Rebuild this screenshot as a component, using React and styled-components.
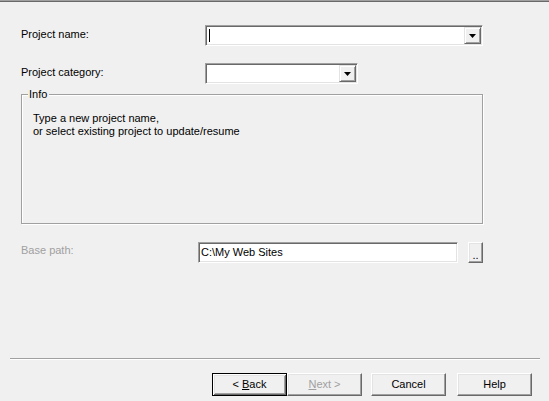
import React from "react";
import styled, { createGlobalStyle } from "styled-components";

const GlobalStyle = createGlobalStyle`
  html, body {
    margin: 0;
    padding: 0;
    background: #f0f0f0;
  }
  body {
    font-family: "Liberation Sans", Arial, sans-serif;
    font-size: 11px;
    color: #000;
  }
`;

const Wizard = styled.div`
  width: 549px;
  height: 401px;
  box-sizing: border-box;
  display: flex;
  flex-direction: column;
  background: #f0f0f0;
  border-top: 1px solid #a0a0a0;
  box-shadow: inset 0 1px 0 #696969;
  overflow: hidden;
`;

const Body = styled.div`
  display: flex;
  flex-direction: column;
  padding: 24px 0 0 21px;
`;

const FieldRow = styled.div`
  display: grid;
  grid-template-columns: 184px auto;
  height: 21px;
  margin-top: ${(p) => p.$gap || 0}px;
`;

const Label = styled.div`
  line-height: 13px;
  padding-top: 3px;
  color: ${(p) => (p.$disabled ? "#a0a0a0" : "#000")};
`;

const Combo = styled.div`
  width: ${(p) => p.$width}px;
  height: 21px;
  box-sizing: border-box;
  display: flex;
  align-items: center;
  justify-content: space-between;
  padding: 1px;
  background: #fff;
  border: 1px solid;
  border-color: #a0a0a0 #fff #fff #a0a0a0;
  box-shadow: inset 1px 1px 0 #696969, inset -1px -1px 0 #e3e3e3;
`;

const Caret = styled.span`
  width: 1px;
  height: 13px;
  margin-left: 2px;
  background: #000;
`;

const DropButton = styled.div`
  width: 17px;
  height: 17px;
  box-sizing: border-box;
  margin-left: auto;
  display: flex;
  align-items: center;
  justify-content: center;
  background: #f0f0f0;
  border: 1px solid;
  border-color: #e3e3e3 #696969 #696969 #e3e3e3;
  box-shadow: inset 1px 1px 0 #fff, inset -1px -1px 0 #a0a0a0;
`;

const GroupBox = styled.div`
  position: relative;
  width: 462px;
  height: 130px;
  box-sizing: border-box;
  margin-top: 10px;
  border: 1px solid #a0a0a0;
  box-shadow: 1px 1px 0 #fff, inset 1px 1px 0 #fff;
`;

const Legend = styled.span`
  position: absolute;
  top: -7px;
  left: 6px;
  padding: 0 2px 0 1px;
  line-height: 13px;
  background: #f0f0f0;
`;

const InfoText = styled.div`
  padding: 17px 0 0 11px;
  line-height: 13px;
`;

const PathRow = styled.div`
  display: flex;
  align-items: flex-start;
  margin-top: 18px;
  height: 21px;
`;

const PathLabel = styled(Label)`
  width: 177px;
  padding-top: 2px;
`;

const PathInput = styled.div`
  width: 260px;
  height: 21px;
  box-sizing: border-box;
  padding: 2px 2px 0;
  line-height: 15px;
  background: #fff;
  border: 1px solid;
  border-color: #a0a0a0 #fff #fff #a0a0a0;
  box-shadow: inset 1px 1px 0 #696969, inset -1px -1px 0 #e3e3e3;
`;

const BrowseButton = styled.div`
  width: 15px;
  height: 21px;
  box-sizing: border-box;
  margin-left: 10px;
  display: flex;
  align-items: flex-end;
  justify-content: center;
  padding-bottom: 3px;
  line-height: 8px;
  background: #f0f0f0;
  border: 1px solid;
  border-color: #fff #696969 #696969 #fff;
  box-shadow: inset -1px -1px 0 #a0a0a0, inset 1px 1px 0 #e3e3e3;
`;

const Footer = styled.div`
  margin-top: auto;
  display: flex;
  flex-direction: column;
  padding-bottom: 5px;
`;

const Separator = styled.div`
  margin: 0 9px 0 10px;
  border-top: 1px solid #a0a0a0;
  border-bottom: 1px solid #fff;
`;

const ButtonBar = styled.div`
  display: flex;
  padding: 13px 0 0 212px;
`;

const Button = styled.div`
  width: 75px;
  height: 23px;
  box-sizing: border-box;
  margin-left: ${(p) => p.$gap || 0}px;
  display: flex;
  align-items: center;
  justify-content: center;
  line-height: 13px;
  background: #f0f0f0;
  color: ${(p) => (p.$disabled ? "#a0a0a0" : "#000")};
  border: 1px solid;
  border-color: ${(p) =>
    p.$default ? "#000" : "#fff #696969 #696969 #fff"};
  box-shadow: ${(p) =>
    p.$default
      ? "inset 1px 1px 0 #fff, inset -1px -1px 0 #696969, inset 2px 2px 0 #e3e3e3, inset -2px -2px 0 #a0a0a0"
      : "inset -1px -1px 0 #a0a0a0, inset 1px 1px 0 #e3e3e3"};
`;

const Arrow = () => (
  <svg width="7" height="4" viewBox="0 0 7 4">
    <polygon points="0,0 7,0 3.5,4" fill="#000" />
  </svg>
);

export default function App() {
  return (
    <>
      <GlobalStyle />
      <Wizard>
        <Body>
          <FieldRow>
            <Label>Project name:</Label>
            <Combo $width={278}>
              <Caret />
              <DropButton>
                <Arrow />
              </DropButton>
            </Combo>
          </FieldRow>
          <FieldRow $gap={17}>
            <Label>Project category:</Label>
            <Combo $width={153}>
              <DropButton>
                <Arrow />
              </DropButton>
            </Combo>
          </FieldRow>
          <GroupBox>
            <Legend>Info</Legend>
            <InfoText>
              Type a new project name,
              <br />
              or select existing project to update/resume
            </InfoText>
          </GroupBox>
          <PathRow>
            <PathLabel $disabled>Base path:</PathLabel>
            <PathInput>C:\My Web Sites</PathInput>
            <BrowseButton>..</BrowseButton>
          </PathRow>
        </Body>
        <Footer>
          <Separator />
          <ButtonBar>
            <Button $default>
              &lt;&nbsp;<u>B</u>ack
            </Button>
            <Button $disabled>
              <u>N</u>ext&nbsp;&gt;
            </Button>
            <Button $gap={9}>Cancel</Button>
            <Button $gap={11}>Help</Button>
          </ButtonBar>
        </Footer>
      </Wizard>
    </>
  );
}
